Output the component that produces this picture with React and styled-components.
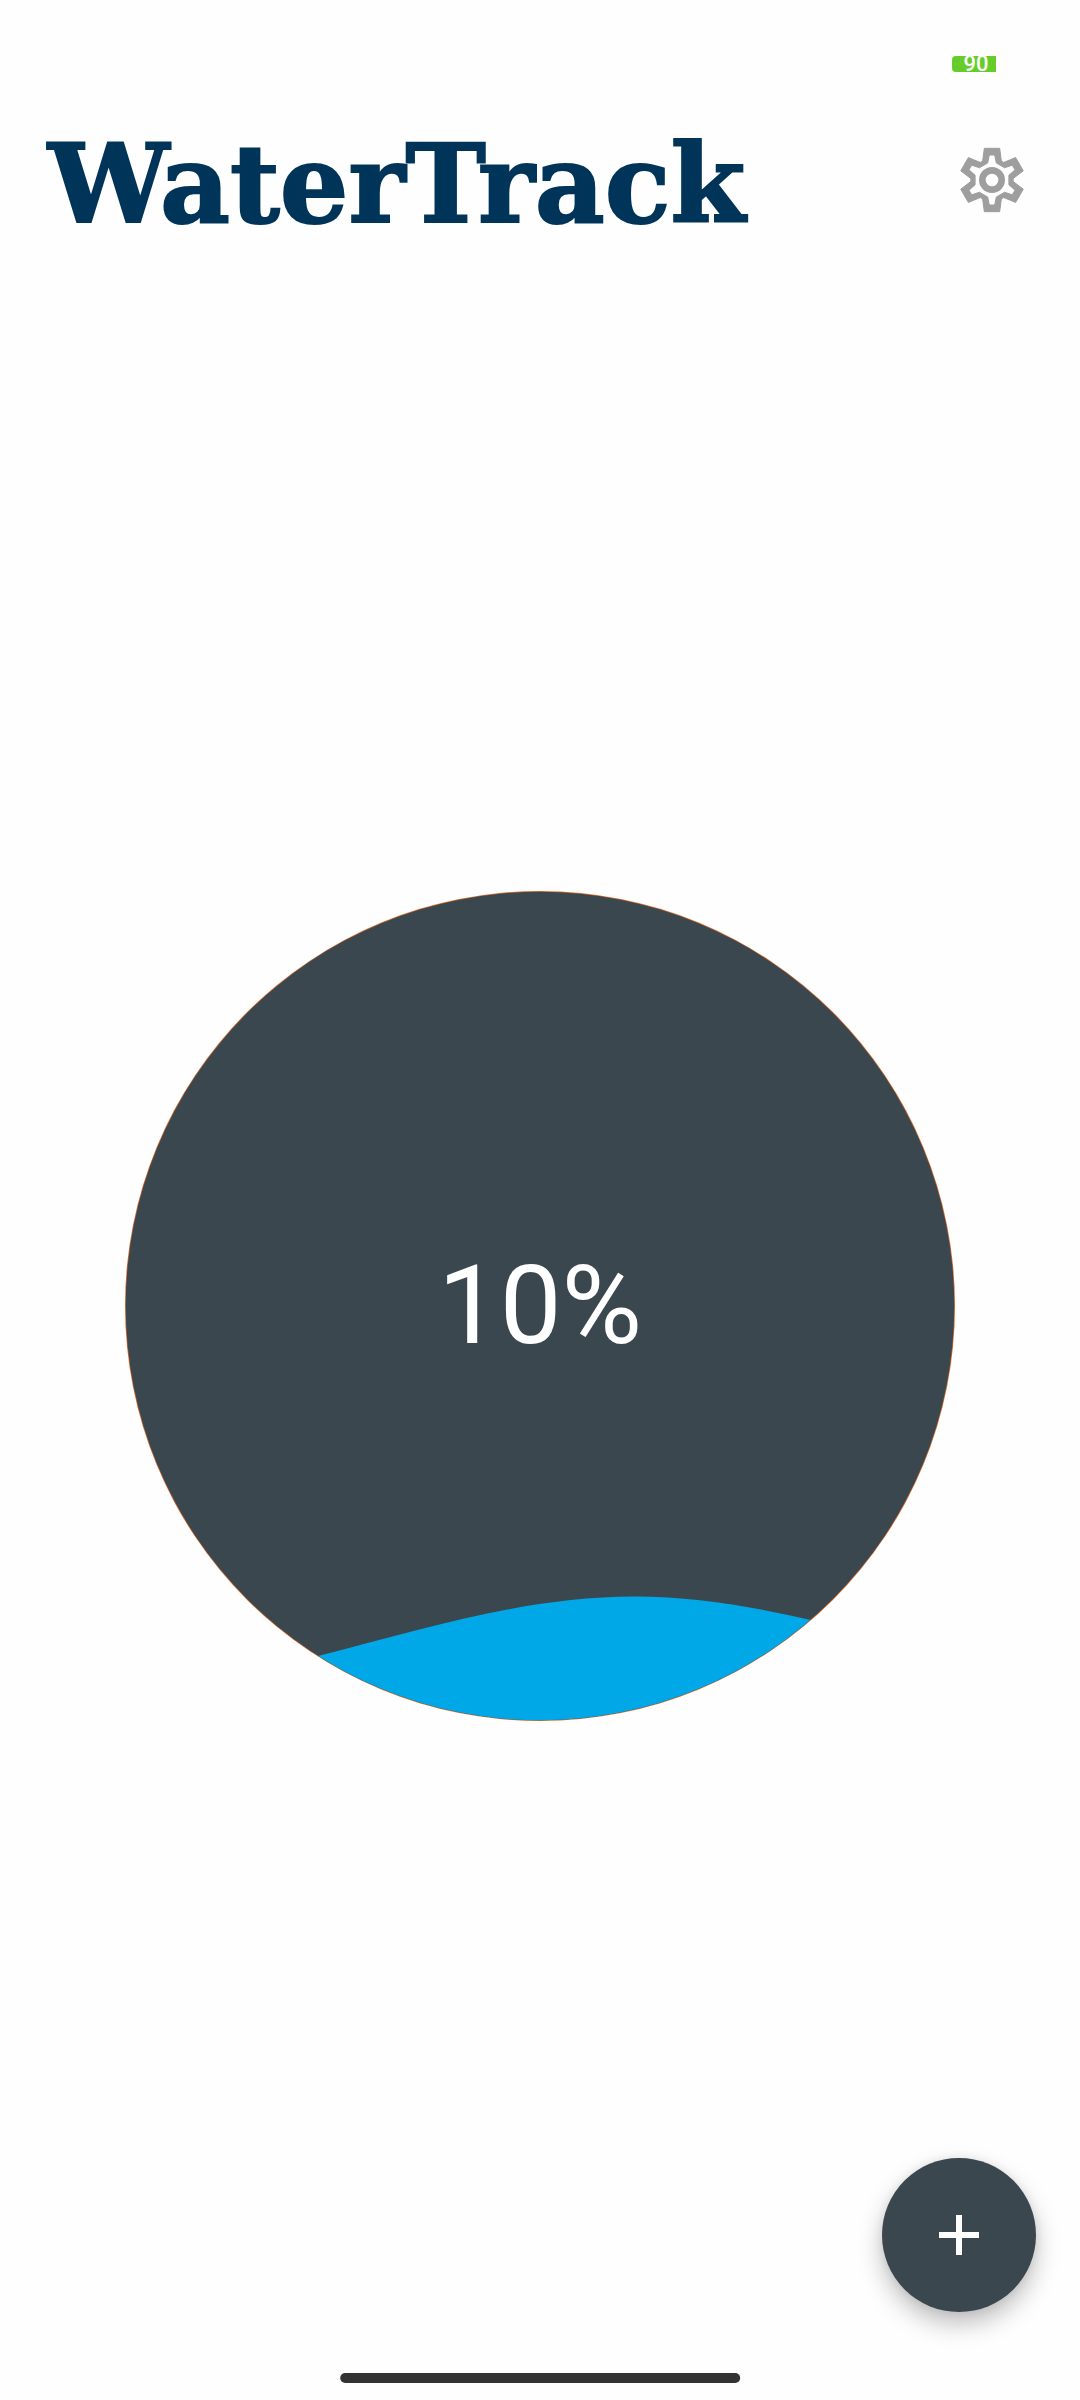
import React from "react";
import styled, { createGlobalStyle } from "styled-components";

const GlobalStyle = createGlobalStyle`
  * { box-sizing: border-box; }
  body {
    margin: 0;
    background: #fefefe;
    font-family: Roboto, "Liberation Sans", sans-serif;
  }
`;

const Page = styled.div`
  display: flex;
  flex-direction: column;
  min-height: 100vh;
`;

const StatusBar = styled.div`
  display: flex;
  align-items: flex-start;
  justify-content: flex-end;
  height: 128px;
  padding: 56px 84px 0;
`;

const Battery = styled.div`
  width: 44px;
  padding-left: 4px;
  border-radius: 4px 0 0 4px;
  background: #66cc29;
  color: #fefefe;
  font-size: 22px;
  font-weight: 500;
  line-height: 16px;
  text-align: center;
`;

const Header = styled.header`
  display: flex;
  align-items: center;
  justify-content: space-between;
  padding: 0 56px 0 48px;
`;

const Title = styled.h1`
  margin: 0;
  padding-top: 8px;
  color: #003459;
  font-family: "DejaVu Serif", serif;
  font-size: 108px;
  font-weight: 700;
  line-height: 96px;
  -webkit-text-stroke: 2px #003459;
`;

const IconButton = styled.button`
  display: flex;
  padding: 0;
  border: 0;
  background: none;
  color: #9e9e9e;
  cursor: pointer;
`;

const Main = styled.main`
  display: flex;
  flex: 1;
  align-items: center;
  justify-content: center;
  padding-bottom: 20px;
`;

const Gauge = styled.div`
  display: grid;
  place-items: center;
  width: 77%;
  max-width: 830px;
  aspect-ratio: 1;
  & > * { grid-area: 1 / 1; }
`;

const GaugeDrawing = styled.svg`
  display: block;
  width: 100%;
  height: 100%;
`;

const Percent = styled.span`
  color: #fff;
  font-size: 110px;
  line-height: 128px;
`;

const AddButton = styled.button`
  position: fixed;
  right: 44px;
  bottom: 88px;
  display: flex;
  align-items: center;
  justify-content: center;
  width: 154px;
  height: 154px;
  padding: 0;
  border: 0;
  border-radius: 50%;
  background: #3b474f;
  color: #fff;
  box-shadow: 0 12px 24px rgba(0, 0, 0, 0.25), 0 0 12px rgba(0, 0, 0, 0.08);
  cursor: pointer;
`;

const HomeIndicator = styled.div`
  position: fixed;
  bottom: 17px;
  left: 50%;
  width: 37%;
  height: 10px;
  border-radius: 5px;
  background: #333;
  transform: translateX(-50%);
`;

// Repeats the points of one tooth six times around the origin.
function gearOutline(tooth) {
  const points = [];
  for (let k = 0; k < 6; k += 1) {
    const a = (k * Math.PI) / 3;
    tooth.forEach(([x, y]) => {
      const px = x * Math.cos(a) - y * Math.sin(a);
      const py = x * Math.sin(a) + y * Math.cos(a);
      points.push(`${px.toFixed(1)} ${py.toFixed(1)}`);
    });
  }
  return `M${points.join("L")}Z`;
}

const GEAR =
  gearOutline([[-28, -57], [-23, -95], [23, -95], [28, -57]]) +
  gearOutline([[-13, -51], [-8, -75], [8, -75], [13, -51]]);

function GearIcon() {
  return (
    <svg width="64" height="66" viewBox="-96 -99 192 198" aria-hidden="true">
      <path
        d={GEAR}
        fill="currentColor"
        fillRule="evenodd"
        stroke="currentColor"
        strokeWidth="3"
        strokeLinejoin="round"
      />
      <circle r="29" fill="none" stroke="currentColor" strokeWidth="20" />
    </svg>
  );
}

function WaterGauge({ percent }) {
  return (
    <Gauge>
      <GaugeDrawing viewBox="0 0 830 830" aria-hidden="true">
        <defs>
          <clipPath id="bowl">
            <circle cx="415" cy="415" r="414.3" />
          </clipPath>
        </defs>
        <circle cx="415" cy="415" r="415" fill="#e0702a" />
        <g clipPath="url(#bowl)">
          <rect width="830" height="830" fill="#3b474f" />
          <path
            d="M113 785L193 765C300 738 400 705.5 510 705.5C570 705.5 630 716 686 729L760 747V830H113Z"
            fill="#00a8e8"
          />
        </g>
      </GaugeDrawing>
      <Percent>{percent}%</Percent>
    </Gauge>
  );
}

export default function App() {
  return (
    <Page>
      <GlobalStyle />
      <StatusBar>
        <Battery>90</Battery>
      </StatusBar>
      <Header>
        <Title>WaterTrack</Title>
        <IconButton type="button" aria-label="Settings">
          <GearIcon />
        </IconButton>
      </Header>
      <Main>
        <WaterGauge percent={10} />
      </Main>
      <AddButton type="button" aria-label="Add water">
        <svg width="40" height="40" viewBox="0 0 40 40" aria-hidden="true">
          <path d="M20 0V40M0 20H40" stroke="currentColor" strokeWidth="6" />
        </svg>
      </AddButton>
      <HomeIndicator />
    </Page>
  );
}
